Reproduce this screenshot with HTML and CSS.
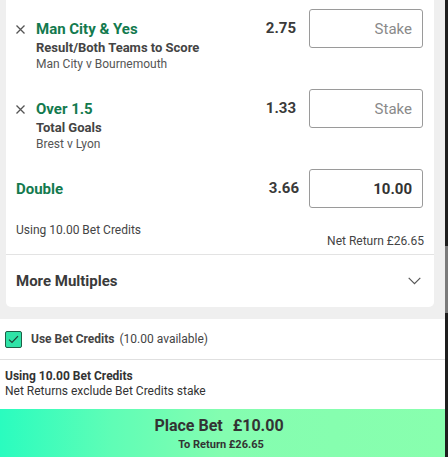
FILE: index.html
```html
<!DOCTYPE html>
<html lang="en">
<head>
<meta charset="utf-8">
<title>Bet Slip</title>
<link rel="stylesheet" href="styles.css">
</head>
<body>
<div class="app">
  <div class="main">
    <div class="slip">
      <div class="card">
        <div class="bet">
          <div class="remove"><svg width="9" height="9" viewBox="0 0 9 9"><path d="M0.5 0.5L8.5 8.5M8.5 0.5L0.5 8.5" stroke="#555" stroke-width="1.3" fill="none"/></svg></div>
          <div class="info">
            <div class="sel">Man City &amp; Yes</div>
            <div class="market">Result/Both Teams to Score</div>
            <div class="event">Man City v Bournemouth</div>
          </div>
          <div class="odds">2.75</div>
          <input class="stake" type="text" placeholder="Stake">
        </div>
        <div class="bet">
          <div class="remove"><svg width="9" height="9" viewBox="0 0 9 9"><path d="M0.5 0.5L8.5 8.5M8.5 0.5L0.5 8.5" stroke="#555" stroke-width="1.3" fill="none"/></svg></div>
          <div class="info">
            <div class="sel">Over 1.5</div>
            <div class="market">Total Goals</div>
            <div class="event">Brest v Lyon</div>
          </div>
          <div class="odds">1.33</div>
          <input class="stake" type="text" placeholder="Stake">
        </div>
        <div class="bet multi">
          <div class="info">
            <div class="sel">Double</div>
          </div>
          <div class="odds">3.66</div>
          <input class="stake filled" type="text" value="10.00">
        </div>
        <div class="credits-row">
          <span class="using">Using 10.00 Bet Credits</span>
          <span class="net">Net Return £26.65</span>
        </div>
        <div class="more">
          <span>More Multiples</span>
          <svg width="13" height="8" viewBox="0 0 13 8"><path d="M0.7 0.9L6.5 6.6L12.3 0.9" stroke="#555" stroke-width="1.2" fill="none"/></svg>
        </div>
      </div>
    </div>
    <div class="bottom">
      <label class="use-credits">
        <span class="checkbox"><svg width="11" height="9" viewBox="0 0 11 9"><path d="M1 4.6L4 7.5L10 1.2" stroke="#1f3d33" stroke-width="1.2" fill="none"/></svg></span>
        <span class="uc-label">Use Bet Credits</span>
        <span class="uc-avail">(10.00 available)</span>
      </label>
      <div class="credit-note">
        <div class="cn-title">Using 10.00 Bet Credits</div>
        <div class="cn-text">Net Returns exclude Bet Credits stake</div>
      </div>
    </div>
    <button class="place" type="button">
      <span class="place-main">Place Bet <span class="place-amt">£10.00</span></span>
      <span class="place-sub">To Return £26.65</span>
    </button>
  </div>
  <div class="scrollbar"><div class="thumb"></div></div>
</div>
</body>
</html>
```

FILE: styles.css
```css
* { box-sizing: border-box; }
html, body {
  margin: 0;
  padding: 0;
  background: #efefef;
  font-family: Roboto, "Liberation Sans", Arial, sans-serif;
  color: #333;
}
.app {
  display: flex;
  width: 448px;
  height: 457px;
  overflow: hidden;
}
.main {
  width: 445px;
  display: flex;
  flex-direction: column;
}
.scrollbar {
  width: 3px;
  background: #1e1e1e;
  display: flex;
  flex-direction: column;
}
.thumb {
  margin-top: 246px;
  height: 67px;
  background: #7a7a7a;
}
.slip {
  height: 319px;
  padding: 0 11px 0 6px;
}
.card {
  background: #fff;
  height: 307px;
  border-radius: 0 0 5px 5px;
  padding-left: 10px;
}
.bet {
  display: flex;
  align-items: flex-start;
  height: 80px;
  padding-top: 9px;
  padding-right: 11px;
}
.remove {
  width: 20px;
  padding-top: 16px;
  display: flex;
}
.info {
  flex: 1;
  padding-top: 10px;
}
.sel {
  font-size: 15px;
  font-weight: 700;
  line-height: 20px;
  color: #137a4e;
}
.market {
  font-size: 13px;
  font-weight: 700;
  line-height: 16px;
  margin-top: 1px;
  color: #444;
}
.event {
  font-size: 12px;
  line-height: 16px;
  color: #555;
}
.odds {
  font-size: 15px;
  font-weight: 700;
  line-height: 39px;
  margin-right: 13px;
  color: #3a3a3a;
}
.stake {
  width: 114px;
  height: 39px;
  border: 1px solid #9a9a9a;
  border-radius: 3px;
  padding: 0 10px;
  text-align: right;
  font-family: Roboto, "Liberation Sans", Arial, sans-serif;
  font-size: 15px;
  color: #333;
  background: #fff;
  outline: none;
}
.stake::placeholder { color: #8a8a8a; }
.stake.filled { font-weight: 700; }
.bet.multi {
  height: 48px;
  align-items: center;
  padding-top: 9px;
}
.multi .info { padding-top: 0; }
.multi .odds { margin-right: 10px; }
.credits-row {
  height: 47px;
  border-bottom: 1px solid #e3e3e3;
  display: flex;
  justify-content: space-between;
  align-items: flex-start;
  font-size: 12px;
  line-height: 16px;
  color: #444;
  margin-left: -10px;
  padding-left: 10px;
}
.using { margin-top: 14px; }
.net { margin-top: 25px; padding-right: 10px; }
.more {
  height: 51px;
  display: flex;
  align-items: center;
  justify-content: space-between;
  padding-right: 13px;
  font-size: 15px;
  font-weight: 700;
  color: #3a3a3a;
}
.more svg { margin-top: 1px; }
.bottom {
  background: #fff;
  height: 90px;
}
.use-credits {
  display: flex;
  align-items: center;
  height: 41px;
  padding-left: 5px;
  border-bottom: 1px solid #e0e0e0;
  font-size: 12px;
  color: #444;
}
.checkbox {
  width: 17px;
  height: 17px;
  border: 1px solid #1f5e47;
  border-radius: 2px;
  background: #2fe3a7;
  display: flex;
  align-items: center;
  justify-content: center;
  margin-right: 9px;
}
.uc-label { font-weight: 700; margin-right: 5px; }
.credit-note {
  padding: 9px 5px 0;
  font-size: 12px;
  line-height: 15px;
  color: #333;
}
.cn-title { font-weight: 700; }
.place {
  flex: 1;
  border: 0;
  margin: 0;
  padding: 7px 7px 0 0;
  display: flex;
  flex-direction: column;
  align-items: center;
  justify-content: flex-start;
  background: linear-gradient(90deg, #2afcbf 0%, #5ffdb6 25%, #84fdb0 50%, #88ffae 100%);
  font-family: Roboto, "Liberation Sans", Arial, sans-serif;
  color: #333;
}
.place-main {
  font-size: 16px;
  font-weight: 700;
  line-height: 20px;
}
.place-amt { margin-left: 6px; }
.place-sub {
  margin-top: 2px;
  margin-left: 4px;
  font-size: 11px;
  font-weight: 700;
  line-height: 14px;
}
```
